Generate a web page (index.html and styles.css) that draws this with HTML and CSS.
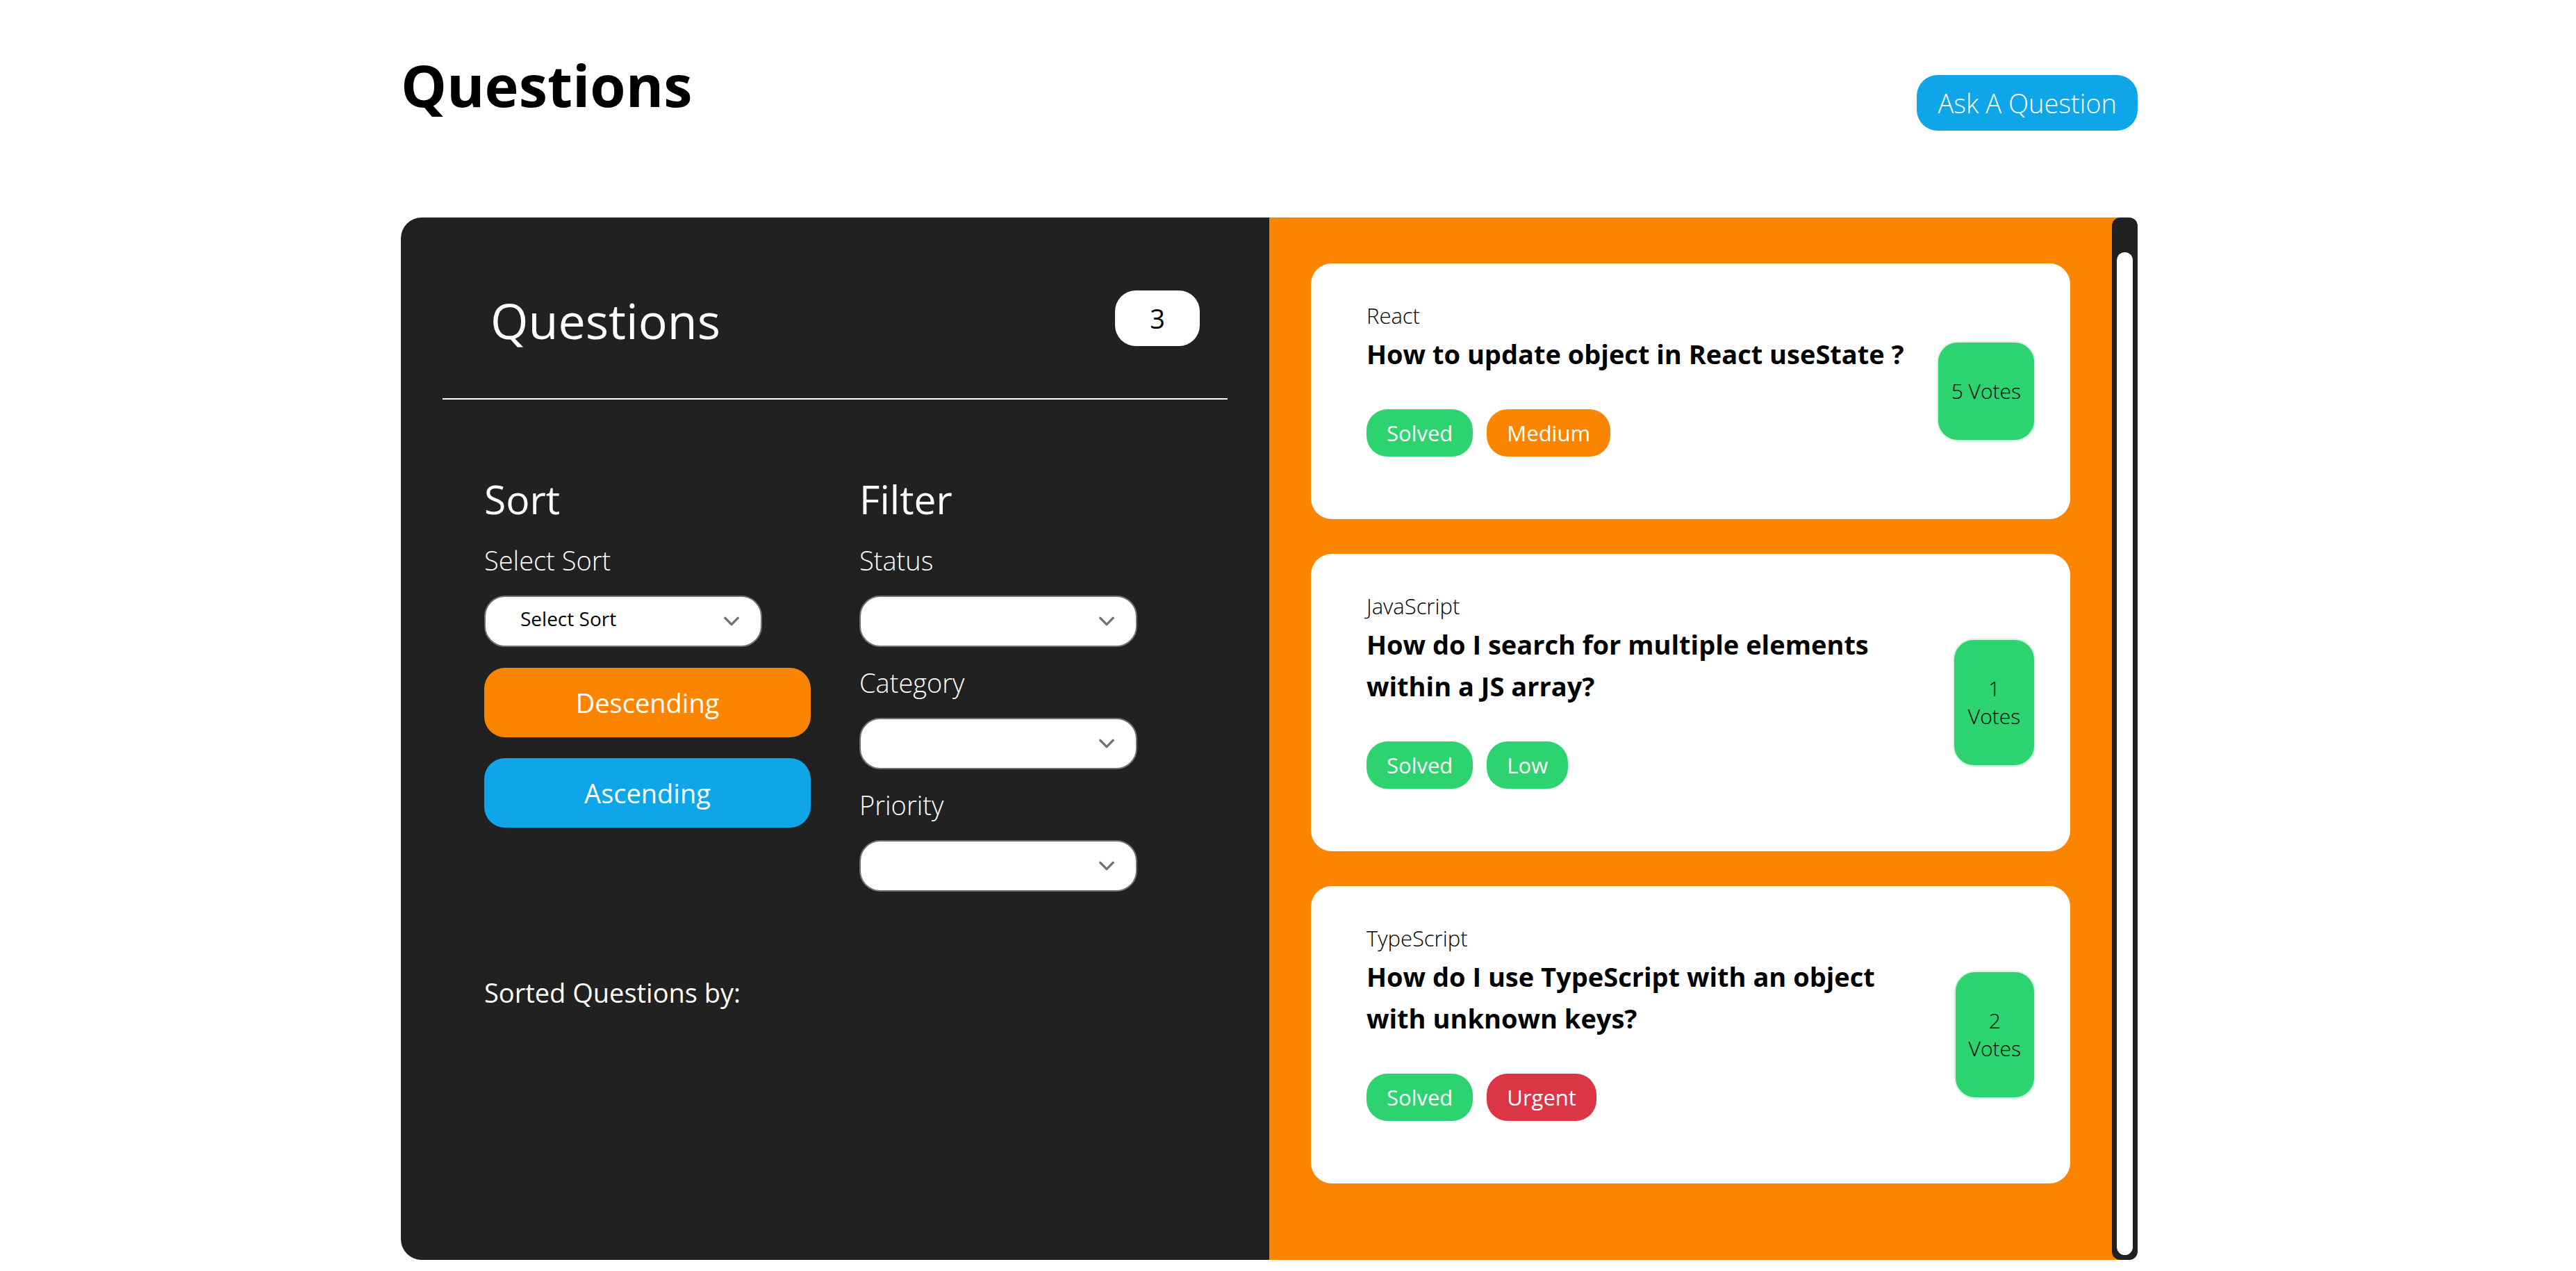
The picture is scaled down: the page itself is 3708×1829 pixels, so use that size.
FILE: index.html
```html
<!DOCTYPE html>
<html lang="en">
<head>
<meta charset="utf-8">
<meta name="viewport" content="width=device-width, initial-scale=1">
<title>Questions</title>
<link rel="stylesheet" href="styles.css">
</head>
<body>
<main class="page">
  <header class="page-header">
    <h1 class="page-title">Questions</h1>
    <button class="ask-button" type="button">Ask A Question</button>
  </header>

  <div class="board">
    <section class="controls" aria-labelledby="controls-title">
      <div class="controls-head">
        <h2 class="controls-title" id="controls-title">Questions</h2>
        <span class="count">3</span>
      </div>
      <div class="controls-body">
        <div class="columns">
          <div class="column">
            <h3 class="column-title">Sort</h3>
            <label class="field-label" for="sort">Select Sort</label>
            <div class="select-box">
              <select class="select" id="sort"><option>Select Sort</option><option>Votes</option></select>
              <svg class="chevron" viewBox="0 0 20 20" aria-hidden="true"><path d="M6 8l4 4 4-4"/></svg>
            </div>
            <div class="order">
              <button class="order-button descending" type="button">Descending</button>
              <button class="order-button ascending" type="button">Ascending</button>
            </div>
          </div>
          <div class="column">
            <h3 class="column-title">Filter</h3>
            <label class="field-label" for="status">Status</label>
            <div class="select-box">
              <select class="select" id="status"><option></option><option>Solved</option></select>
              <svg class="chevron" viewBox="0 0 20 20" aria-hidden="true"><path d="M6 8l4 4 4-4"/></svg>
            </div>
            <label class="field-label" for="category">Category</label>
            <div class="select-box">
              <select class="select" id="category"><option></option><option>React</option><option>JavaScript</option><option>TypeScript</option></select>
              <svg class="chevron" viewBox="0 0 20 20" aria-hidden="true"><path d="M6 8l4 4 4-4"/></svg>
            </div>
            <label class="field-label" for="priority">Priority</label>
            <div class="select-box">
              <select class="select" id="priority"><option></option><option>Low</option><option>Medium</option><option>Urgent</option></select>
              <svg class="chevron" viewBox="0 0 20 20" aria-hidden="true"><path d="M6 8l4 4 4-4"/></svg>
            </div>
          </div>
        </div>
        <p class="sorted-by">Sorted Questions by:</p>
      </div>
    </section>

    <section class="results" aria-label="Question list">
      <div class="list">
        <article class="card">
          <div class="card-text">
            <p class="category">React</p>
            <h3 class="card-title">How to update object in React useState ?</h3>
            <div class="tags"><span class="tag green">Solved</span><span class="tag orange">Medium</span></div>
          </div>
          <div class="votes">5 Votes</div>
        </article>
        <article class="card">
          <div class="card-text">
            <p class="category">JavaScript</p>
            <h3 class="card-title">How do I search for multiple elements within a JS array?</h3>
            <div class="tags"><span class="tag green">Solved</span><span class="tag green">Low</span></div>
          </div>
          <div class="votes">1 Votes</div>
        </article>
        <article class="card">
          <div class="card-text">
            <p class="category">TypeScript</p>
            <h3 class="card-title">How do I use TypeScript with an object with unknown keys?</h3>
            <div class="tags"><span class="tag green">Solved</span><span class="tag red">Urgent</span></div>
          </div>
          <div class="votes">2 Votes</div>
        </article>
      </div>
      <div class="track" aria-hidden="true"><div class="thumb"></div></div>
    </section>
  </div>
</main>
</body>
</html>
```
FILE: styles.css
```css
:root {
  --dark: #212121;
  --orange: #fb8500;
  --blue: #0ea5e9;
  --green: #2dd36f;
  --red: #dc3545;
  --radius: 30px;
}

* {
  box-sizing: border-box;
}

body {
  margin: 0;
  padding-right: 54px;
  background: #fff;
  color: #000;
  font-family: "Segoe UI", "Open Sans", "Noto Sans", sans-serif;
  font-size: 38px;
  line-height: 60px;
}

h1, h2, h3, p {
  margin: 0;
}

button, select {
  font: inherit;
}

.page {
  max-width: 2500px;
  margin: 0 auto;
}

.page-header {
  display: flex;
  justify-content: space-between;
  align-items: flex-end;
  padding: 56px 0 125px;
}

.page-title {
  font-size: 83px;
  font-weight: 700;
  line-height: 132px;
}

.ask-button {
  padding: 10px 30px;
  border: 0;
  border-radius: var(--radius);
  background: var(--blue);
  color: #fff;
  font-weight: 300;
}

.board {
  display: grid;
  grid-template-columns: 1fr 1fr;
  border-radius: var(--radius) 12px 12px var(--radius);
  overflow: hidden;
}

/* Sort and filter panel */
.controls {
  padding: 105px 60px 60px;
  background: var(--dark);
  color: #fff;
}

.controls-head {
  display: flex;
  justify-content: space-between;
  align-items: flex-end;
  padding: 0 40px 75px 69px;
  border-bottom: 2px solid #fff;
}

.controls-title {
  font-size: 70px;
  font-weight: 400;
  line-height: 74px;
}

.count {
  padding: 10px 50px;
  border-radius: var(--radius);
  background: #fff;
  color: #000;
}

.controls-body {
  padding: 106px 60px 0;
}

.columns {
  display: grid;
  grid-template-columns: 1fr 1fr;
  gap: 70px;
}

.column {
  display: flex;
  flex-direction: column;
  gap: 21px;
}

.column-title {
  font-size: 57px;
  font-weight: 400;
  line-height: 74px;
}

.field-label {
  font-weight: 300;
}

.select-box {
  display: grid;
  align-items: center;
  max-width: 400px;
}

.select {
  grid-area: 1 / 1;
  width: 100%;
  height: 74px;
  padding: 0 80px 8px 50px;
  border: 2px solid #6b7280;
  border-radius: var(--radius);
  background: #fff;
  color: #000;
  font-size: 28px;
  line-height: 40px;
  appearance: none;
}

.chevron {
  grid-area: 1 / 1;
  justify-self: end;
  width: 46px;
  height: 46px;
  margin-right: 21px;
  fill: none;
  stroke: #6b7280;
  stroke-width: 1.5;
  stroke-linecap: round;
  stroke-linejoin: round;
  pointer-events: none;
}

.order {
  display: grid;
  gap: 30px;
  margin-top: 9px;
}

.order-button {
  padding: 20px;
  border: 0;
  border-radius: var(--radius);
  color: #fff;
}

.descending {
  background: var(--orange);
}

.ascending {
  background: var(--blue);
}

.sorted-by {
  margin-top: 115px;
}

/* Question list */
.results {
  display: flex;
  background: var(--orange);
}

.list {
  flex: 1;
  display: flex;
  flex-direction: column;
  gap: 50px;
  padding: 66px 60px 110px;
}

.card {
  display: flex;
  justify-content: space-between;
  align-items: center;
  gap: 30px;
  padding: 50px 50px 90px 80px;
  border-radius: var(--radius);
  background: #fff;
}

.category {
  font-size: 31px;
  font-weight: 300;
  line-height: 50px;
}

.card-title {
  font-size: 38px;
  font-weight: 700;
}

.tags {
  display: flex;
  gap: 20px;
  margin-top: 50px;
}

.tag {
  padding: 10px 29px;
  border-radius: var(--radius);
  color: #fff;
  font-size: 31px;
  line-height: 48px;
}

.green {
  background: var(--green);
}

.orange {
  background: var(--orange);
}

.red {
  background: var(--red);
}

.votes {
  margin-bottom: -40px;
  padding: 50px 19px;
  border: 2px solid #d5f3e2;
  border-radius: var(--radius);
  background: var(--green);
  font-size: 30px;
  font-weight: 300;
  line-height: 40px;
  text-align: center;
}

.track {
  display: flex;
  width: 37px;
  padding: 50px 7px 7px;
  border-radius: 12px;
  background: var(--dark);
}

.thumb {
  flex: 1;
  border-radius: 12px;
  background: #fff;
}
```
